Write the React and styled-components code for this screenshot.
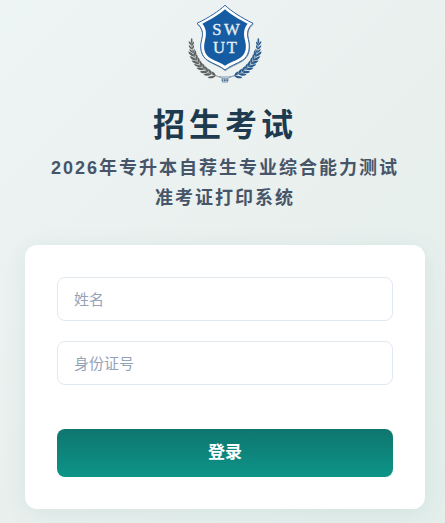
import React, { useState } from 'react';
import styled, { createGlobalStyle } from 'styled-components';

const SHIELD =
  'M135 16 C115 34 88 52 51 70 C66 83 71 98 65 118 C58 146 64 168 83 181 C100 192 122 198 135 210 C148 198 170 192 187 181 C206 168 212 146 205 118 C199 98 204 83 219 70 C182 52 155 34 135 16 Z';
const SHIELD_INNER =
  'M135 28 C114 46 94 58 67 71 C79 85 80 101 75 121 C69 145 73 163 90 174 C106 184 124 188 135 197 C146 188 164 184 180 174 C197 163 201 145 195 121 C190 101 191 85 203 71 C176 58 156 46 135 28 Z';

// x, y and direction of the stem for each pair of leaves
const leaves = [
  [36, 137, -94],
  [37, 148, -98],
  [40, 159, -104],
  [44, 170, -110],
  [50, 181, -118],
  [57, 191, -125],
  [65, 200, -132],
  [74, 208, -139],
  [84, 216, -146],
  [95, 222, -153],
  [107, 228, -160],
];

const Branch = ({ color, mirrored }) => (
  <g
    fill={color}
    stroke={color}
    transform={mirrored ? 'translate(270 0) scale(-1 1)' : undefined}
  >
    <path
      d="M35 124 C34 158 46 184 65 201 C80 215 98 226 124 232"
      fill="none"
      strokeWidth="2"
    />
    <ellipse cx="35" cy="122" rx="2" ry="7" strokeWidth="1" />
    {leaves.map(([x, y, angle], index) => (
      <g
        key={x}
        transform={`translate(${x} ${y}) rotate(${angle}) scale(${index < 3 ? 0.7 : 1})`}
      >
        <path d="M0 0 C3 -8 11 -14 21 -13 C17 -6 9 -1 0 0 Z" strokeWidth="0" />
        <path d="M0 0 C3 7 9 10 17 9 C14 2 7 -1 0 0 Z" strokeWidth="0" />
      </g>
    ))}
  </g>
);

const SchoolLogo = () => (
  <Logo viewBox="15 15 240 240" role="img" aria-label="SWUT">
    <Branch color="#5c6061" />
    <Branch color="#2b5a8c" mirrored />
    <path
      d={SHIELD}
      fill="none"
      stroke="#82919c"
      strokeWidth="3"
      transform="translate(1 2)"
    />
    <path d={SHIELD} fill="#fff" stroke="#2d639d" strokeWidth="3" />
    <path d={SHIELD_INNER} fill="#165ca3" />
    <LogoText>
      <tspan x="97 132" y="106">
        SW
      </tspan>
      <tspan x="99 140" y="158">
        UT
      </tspan>
    </LogoText>
    <path
      d="M117 231 L153 231 M124 236 L146 236 M126 246 L144 246"
      stroke="#7f98ae"
      strokeWidth="3"
    />
    <path
      d="M125 241 L130 241 M132 241 L137 241 M139 241 L145 241"
      stroke="#46698d"
      strokeWidth="6"
    />
  </Logo>
);

const App = () => {
  const [name, setName] = useState('');
  const [idNumber, setIdNumber] = useState('');

  const handleSubmit = (e) => {
    e.preventDefault();
  };

  return (
    <>
      <GlobalStyle />
      <Page>
        <Header>
          <SchoolLogo />
          <Title>招生考试</Title>
          <Subtitle>
            2026年专升本自荐生专业综合能力测试
            <br />
            准考证打印系统
          </Subtitle>
        </Header>

        <LoginCard onSubmit={handleSubmit}>
          <Input
            type="text"
            aria-label="姓名"
            placeholder="姓名"
            value={name}
            onChange={(e) => setName(e.target.value)}
          />
          <Input
            type="text"
            aria-label="身份证号"
            placeholder="身份证号"
            value={idNumber}
            onChange={(e) => setIdNumber(e.target.value)}
          />
          <LoginButton type="submit">登录</LoginButton>
        </LoginCard>
      </Page>
    </>
  );
};

export default App;

const GlobalStyle = createGlobalStyle`
  * {
    box-sizing: border-box;
  }

  body {
    margin: 0;
    font-family: 'Liberation Sans', 'Noto Sans CJK SC', sans-serif;
  }
`;

const Page = styled.main`
  display: flex;
  flex-direction: column;
  align-items: center;
  min-height: 100vh;
  padding: 5px 20px 14px 25px;
  background: linear-gradient(135deg, #edf4f4 0%, #e9f0ee 50%, #e3eeeb 100%);
`;

const Header = styled.header`
  display: flex;
  flex-direction: column;
  align-items: center;
  margin-bottom: 32px;
  text-align: center;
`;

const Logo = styled.svg`
  display: block;
  width: 80px;
  height: 80px;
`;

const LogoText = styled.text`
  fill: #e6eef5;
  stroke: #e6eef5;
  stroke-width: 1px;
  font-family: 'Liberation Serif', serif;
  font-size: 50px;
`;

const Title = styled.h1`
  margin: 16px 0 4px;
  color: #1e3a4f;
  font-size: 32px;
  font-weight: 700;
  line-height: 48px;
  letter-spacing: 4px;
`;

const Subtitle = styled.p`
  margin: 0;
  color: #475569;
  font-size: 18px;
  font-weight: 600;
  line-height: 30px;
  letter-spacing: 2px;
  white-space: nowrap;
`;

const LoginCard = styled.form`
  display: flex;
  flex-direction: column;
  gap: 20px;
  width: 100%;
  max-width: 400px;
  padding: 32px;
  background: #fff;
  border-radius: 12px;
  box-shadow: 0 4px 24px rgba(15, 118, 110, 0.08);
`;

const Input = styled.input`
  width: 100%;
  height: 44px;
  padding: 0 16px;
  border: 1px solid #e2e8f0;
  border-radius: 8px;
  background: #fff;
  color: #1e293b;
  font-family: inherit;
  font-size: 15px;
  outline: none;

  &::placeholder {
    color: #94a3b8;
  }

  &:focus {
    border-color: #0d9488;
  }
`;

const LoginButton = styled.button`
  width: 100%;
  height: 48px;
  margin-top: 24px;
  padding: 0 0 6px;
  border: none;
  border-radius: 8px;
  background: linear-gradient(180deg, #0f766e 0%, #0d9488 100%);
  color: #fff;
  font-family: inherit;
  font-size: 17px;
  font-weight: 600;
  cursor: pointer;
`;
